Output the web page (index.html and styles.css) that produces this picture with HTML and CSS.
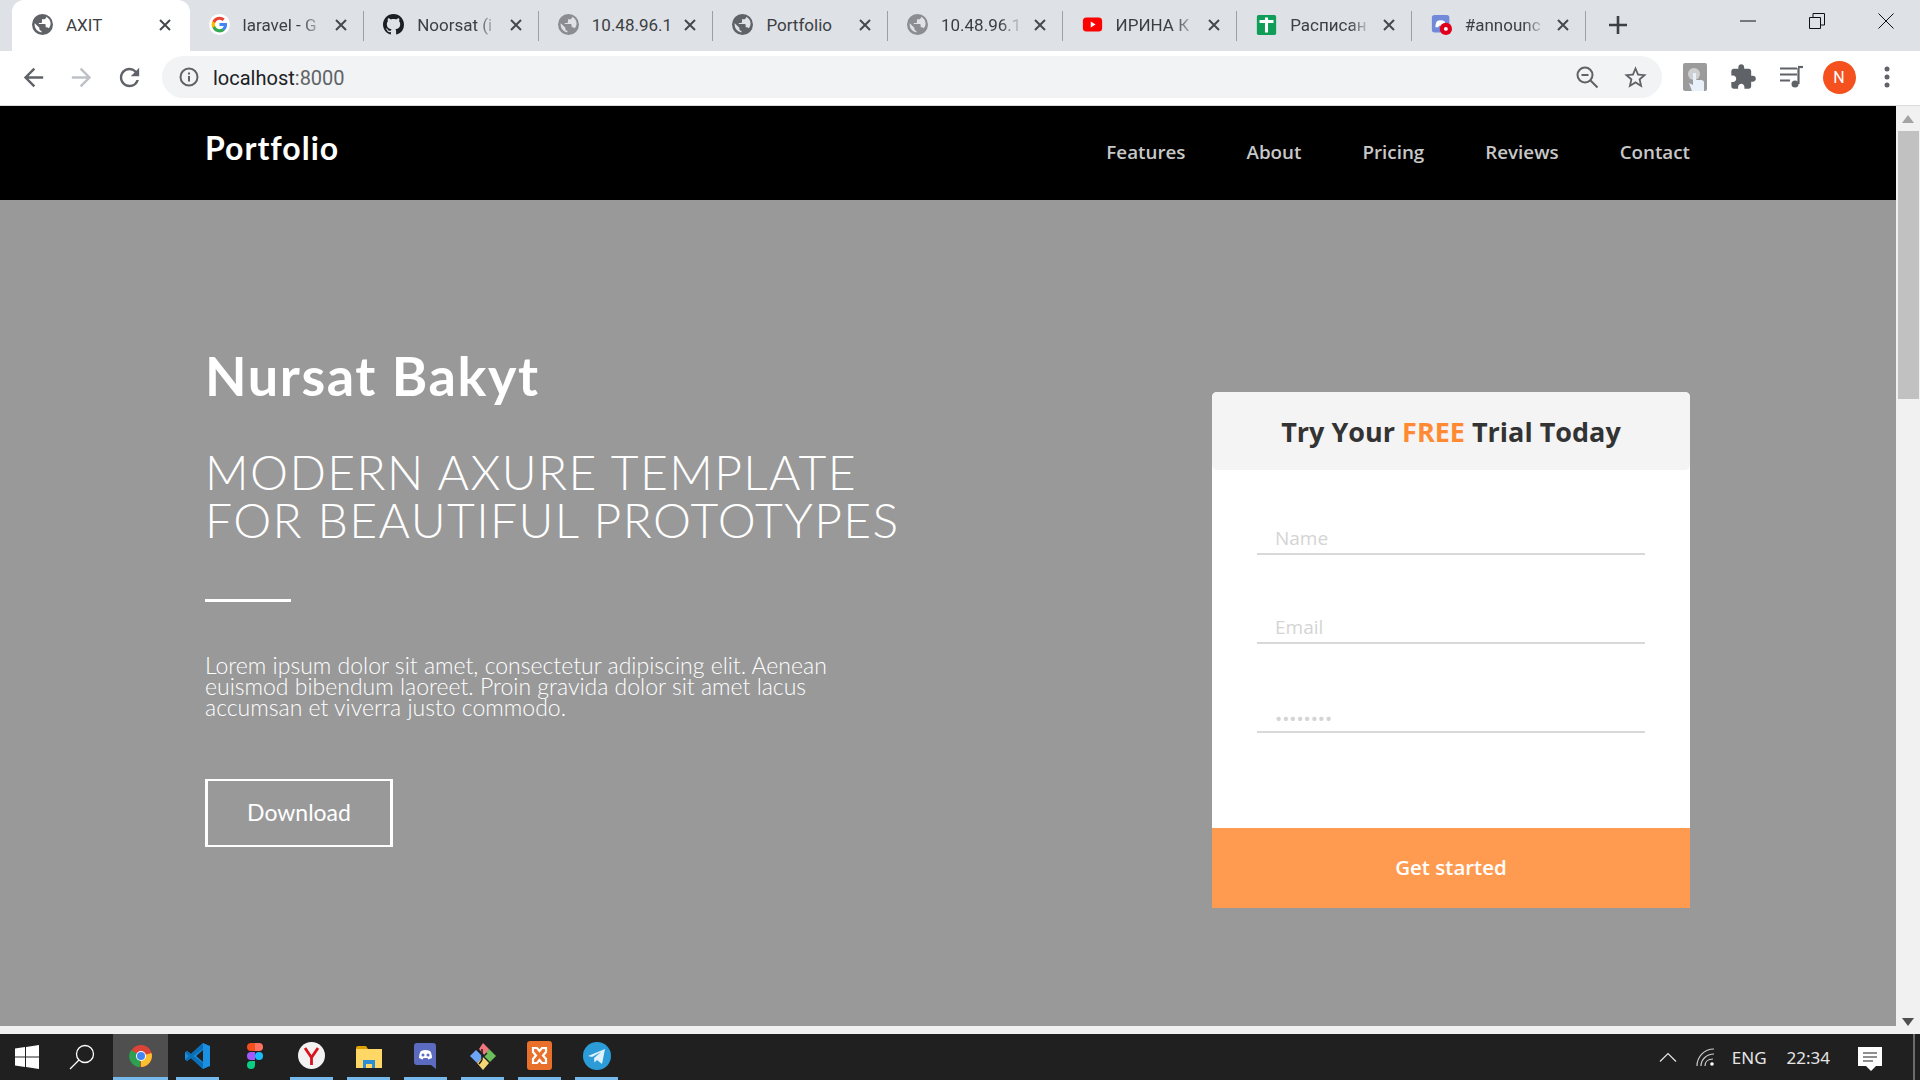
FILE: index.html
```html
<!DOCTYPE html>
<html lang="en">
<head>
    <meta charset="UTF-8">
    <title>AXIT</title>
    <link rel="stylesheet" href="styles.css">
</head>
<body>
    <svg class="defs" width="0" height="0">
        <symbol id="globe" viewBox="2 2 20 20"><path fill-rule="evenodd" d="M12 2a10 10 0 1 0 0 20 10 10 0 0 0 0-20zM4.300 10.500L9 15v1c0 1.100.9 2 2 2v1.500C7.500 19 4.500 16 4.500 12c0-.5 0-1 .2-1.500zM15.500 5c-.3 1-1 2-2.500 2h-1.500v2.500c0 .5-.5 1-1 1H8.500v1H14c.5 0 1 .5 1 1v2h1c.8 0 1.500.4 1.900 1 1.200-1.300 1.800-3 1.800-4.500 0-2.900-1.700-5.300-4.200-6.500z"/></symbol>
        <symbol id="close" viewBox="0 0 12 12"><path d="M1 1l10 10M11 1L1 11" fill="none" stroke="currentColor" stroke-width="2"/></symbol>
    </svg>

    <!-- browser tabs -->
    <div class="tabstrip">
        <div class="tab active">
            <svg class="favicon globe dark"><use href="#globe"/></svg>
            <span class="tab-title">AXIT</span>
            <svg class="tab-close"><use href="#close"/></svg>
        </div>
        <div class="tab">
            <svg class="favicon" viewBox="0 0 24 24">
                <circle cx="12" cy="12" r="12" fill="#fff"/>
                <path d="M20.600 12.200c0-.6-.1-1.200-.2-1.800H12v3.400h4.800c-.2 1.100-.8 2-1.800 2.700v2.200h2.900c1.700-1.600 2.700-3.900 2.700-6.500z" fill="#4285f4"/>
                <path d="M12 21c2.400 0 4.500-.8 5.900-2.200L15 16.500c-.8.5-1.800.9-3 .9-2.300 0-4.300-1.600-5-3.700H4v2.300C5.500 19 8.500 21 12 21z" fill="#34a853"/>
                <path d="M7 13.700c-.4-1.100-.4-2.300 0-3.400V8H4c-1.300 2.500-1.300 5.500 0 8z" fill="#fbbc05"/>
                <path d="M12 6.600c1.300 0 2.500.5 3.400 1.300L18 5.400C16.400 3.900 14.300 3 12 3 8.500 3 5.500 5 4 8l3 2.300c.7-2.100 2.700-3.700 5-3.700z" fill="#ea4335"/>
            </svg>
            <span class="tab-title fade">laravel - G</span>
            <svg class="tab-close"><use href="#close"/></svg>
        </div>
        <div class="tab">
            <svg class="favicon" viewBox="0 0 16 16"><path fill="#1b1f23" d="M8 0C3.580 0 0 3.580 0 8c0 3.540 2.290 6.530 5.470 7.590.4.070.55-.17.55-.38 0-.19-.01-.82-.01-1.490-2.010.37-2.530-.49-2.690-.94-.09-.23-.48-.94-.82-1.130-.28-.15-.68-.52-.01-.53.63-.01 1.080.58 1.230.82.72 1.210 1.870.87 2.330.66.07-.52.28-.87.51-1.070-1.780-.2-3.640-.89-3.640-3.950 0-.87.31-1.590.82-2.150-.08-.2-.36-1.020.08-2.120 0 0 .67-.21 2.200.82.64-.18 1.320-.27 2-.27.68 0 1.360.09 2 .27 1.530-1.040 2.200-.82 2.200-.82.44 1.100.16 1.920.08 2.120.51.56.82 1.270.82 2.150 0 3.070-1.870 3.750-3.650 3.950.29.25.54.73.54 1.480 0 1.070-.01 1.930-.01 2.200 0 .21.15.46.55.38A8.013 8.013 0 0016 8c0-4.420-3.580-8-8-8z"/></svg>
            <span class="tab-title fade">Noorsat (i</span>
            <svg class="tab-close"><use href="#close"/></svg>
        </div>
        <div class="tab">
            <svg class="favicon globe"><use href="#globe"/></svg>
            <span class="tab-title">10.48.96.1</span>
            <svg class="tab-close"><use href="#close"/></svg>
        </div>
        <div class="tab">
            <svg class="favicon globe dark"><use href="#globe"/></svg>
            <span class="tab-title">Portfolio</span>
            <svg class="tab-close"><use href="#close"/></svg>
        </div>
        <div class="tab">
            <svg class="favicon globe"><use href="#globe"/></svg>
            <span class="tab-title fade">10.48.96.1</span>
            <svg class="tab-close"><use href="#close"/></svg>
        </div>
        <div class="tab">
            <svg class="favicon" viewBox="0 0 24 24">
                <rect x="1" y="4" width="22" height="16" rx="4" fill="#f00"/>
                <path d="M10 8.500v7l5.500-3.500z" fill="#fff"/>
            </svg>
            <span class="tab-title fade">ИРИНА К</span>
            <svg class="tab-close"><use href="#close"/></svg>
        </div>
        <div class="tab">
            <svg class="favicon" viewBox="0 0 24 24">
                <rect x="1" y="1" width="22" height="23" rx="2" fill="#0f9d58"/>
                <path d="M4 8.500h16M12 4v17" fill="none" stroke="#fff" stroke-width="3.500"/>
            </svg>
            <span class="tab-title fade">Расписан</span>
            <svg class="tab-close"><use href="#close"/></svg>
        </div>
        <div class="tab">
            <svg class="favicon" viewBox="0 0 24 24">
                <rect x="1" y="1" width="20" height="20" rx="3" fill="#7289da"/>
                <path d="M5 15c0-3 1-6 2-7 2-1 6-1 8 0 1 1 1.500 3 1.500 5l-3 2-1-1.500h-3L8 15z" fill="#fff"/>
                <circle cx="17" cy="17" r="7" fill="#e0001b"/>
                <circle cx="17" cy="17" r="2.200" fill="#fff"/>
            </svg>
            <span class="tab-title fade">#announc</span>
            <svg class="tab-close"><use href="#close"/></svg>
        </div>
        <svg class="new-tab" viewBox="0 0 18 18"><path d="M9 0v18M0 9h18" fill="none" stroke="#3c4043" stroke-width="2.600"/></svg>
        <div class="window-controls">
            <div class="window-btn"><svg width="16" height="16" viewBox="0 0 16 16"><path d="M0 8h16" stroke="#111" fill="none"/></svg></div>
            <div class="window-btn"><svg width="16" height="16" viewBox="0 0 16 16"><path d="M.5 4.500h11v11H.5zM4 4.500V.5h11.500v11.500H11.500" stroke="#111" fill="none"/></svg></div>
            <div class="window-btn"><svg width="16" height="16" viewBox="0 0 16 16"><path d="M.5.5l15 15M15.500.5l-15 15" stroke="#111" fill="none"/></svg></div>
        </div>
    </div>

    <!-- address bar -->
    <div class="toolbar">
        <div class="tool"><svg width="29" height="29" viewBox="0 0 24 24" fill="#5f6368"><path d="M20 11H7.830l5.590-5.590L12 4l-8 8 8 8 1.410-1.410L7.830 13H20v-2z"/></svg></div>
        <div class="tool"><svg width="29" height="29" viewBox="0 0 24 24" fill="#bdc1c6"><path d="M4 11h12.170l-5.590-5.590L12 4l8 8-8 8-1.410-1.410L16.170 13H4v-2z"/></svg></div>
        <div class="tool"><svg width="29" height="29" viewBox="0 0 24 24" fill="#5f6368"><path d="M17.650 6.350A7.958 7.958 0 0 0 12 4c-4.420 0-7.990 3.580-7.990 8s3.570 8 7.990 8c3.730 0 6.840-2.550 7.730-6h-2.080A5.990 5.990 0 0 1 12 18c-3.310 0-6-2.690-6-6s2.690-6 6-6c1.660 0 3.140.690 4.220 1.780L13 11h7V4l-2.350 2.350z"/></svg></div>
        <div class="omnibox">
            <svg class="info" width="22" height="22" viewBox="0 0 22 22"><circle cx="11" cy="11" r="8.500" fill="none" stroke="#5f6368" stroke-width="2"/><path d="M11 10v5.500M11 6.500v2" stroke="#5f6368" stroke-width="2" fill="none"/></svg>
            <span class="url"><span class="host">localhost</span>:8000</span>
            <div class="omni-icons">
                <div class="tool"><svg width="24" height="24" viewBox="0 0 24 24" fill="none" stroke="#5f6368" stroke-width="2"><circle cx="10" cy="10" r="7.500"/><path d="M6.500 10h7M15.500 15.500l7 7"/></svg></div>
                <div class="tool"><svg width="27" height="27" viewBox="0 0 24 24" fill="#5f6368"><path d="M22 9.240l-7.190-.620L12 2 9.190 8.630 2 9.240l5.460 4.730L5.820 21 12 17.270 18.180 21l-1.630-7.030L22 9.240zM12 15.400l-3.760 2.270 1-4.280-3.320-2.880 4.380-.380L12 6.100l1.710 4.040 4.380.380-3.320 2.880 1 4.280L12 15.400z"/></svg></div>
            </div>
        </div>
        <div class="tool">
            <svg width="24" height="28" viewBox="0 0 24 28"><rect width="24" height="28" rx="2" fill="#9b9b9b"/><circle cx="11" cy="11" r="6" fill="#cfcfcf"/><path d="M10 10h3v7h5c2 0 3 1 3 3v8H9l-3-8 4 2z" fill="#e8f1fa"/></svg>
        </div>
        <div class="tool"><svg width="28" height="28" viewBox="0 0 24 24" fill="#5f6368"><path d="M20.500 11H19V7c0-1.100-.9-2-2-2h-4V3.500C13 2.120 11.880 1 10.500 1S8 2.120 8 3.500V5H4c-1.100 0-1.990.9-1.990 2v3.800H3.500c1.490 0 2.700 1.210 2.700 2.700s-1.210 2.700-2.700 2.700H2V20c0 1.100.9 2 2 2h3.800v-1.500c0-1.490 1.210-2.700 2.700-2.700 1.490 0 2.700 1.210 2.700 2.700V22H17c1.100 0 2-.9 2-2v-4h1.500c1.380 0 2.500-1.120 2.500-2.500S21.880 11 20.500 11z"/></svg></div>
        <div class="tool"><svg width="25" height="24" viewBox="0 0 25 24" fill="none" stroke="#5f6368" stroke-width="2.200"><path d="M1 3.500h17M1 9.500h17M1 15.500h10M19.500 3v16"/><circle cx="16" cy="19" r="3.500" fill="#5f6368" stroke="none"/><path d="M19 2h5"/></svg></div>
        <div class="tool"><div class="avatar">N</div></div>
        <div class="tool"><svg width="6" height="22" viewBox="0 0 6 22" fill="#5f6368"><circle cx="3" cy="3" r="2.500"/><circle cx="3" cy="11" r="2.500"/><circle cx="3" cy="19" r="2.500"/></svg></div>
    </div>

    <div class="viewport">
        <div class="page">
            <nav class="navbar">
                <a class="brand">Portfolio</a>
                <div class="nav-links">
                    <a>Features</a>
                    <a>About</a>
                    <a>Pricing</a>
                    <a>Reviews</a>
                    <a>Contact</a>
                </div>
            </nav>
            <section class="hero">
                <div class="hero-text">
                    <h1>Nursat Bakyt</h1>
                    <h2>MODERN AXURE TEMPLATE<br>FOR BEAUTIFUL PROTOTYPES</h2>
                    <div class="rule"></div>
                    <p>Lorem ipsum dolor sit amet, consectetur adipiscing elit. Aenean<br>euismod bibendum laoreet. Proin gravida dolor sit amet lacus<br>accumsan et viverra justo commodo.</p>
                    <a class="download">Download</a>
                </div>
                <div class="card">
                    <div class="card-head">Try Your <span class="free">FREE</span> Trial Today</div>
                    <form class="card-form">
                        <input type="text" placeholder="Name">
                        <input type="text" placeholder="Email">
                        <input class="pass" type="text" placeholder="••••••••">
                    </form>
                    <div class="card-btn">Get started</div>
                </div>
            </section>
            <div class="hscroll"></div>
        </div>
        <div class="vscroll">
            <svg class="arrow" width="14" height="8" viewBox="0 0 14 8"><path d="M7 0l6 8H1z" fill="#a3a3a3"/></svg>
            <div class="thumb"></div>
            <svg class="arrow down" width="14" height="8" viewBox="0 0 14 8"><path d="M7 8L1 0h12z" fill="#505050"/></svg>
        </div>
    </div>

    <!-- windows taskbar -->
    <div class="taskbar">
        <div class="start">
            <svg width="24" height="24" viewBox="0 0 24 24" fill="#fff"><path d="M0 3.500l10-1.400v9.300H0zM11 2l13-2v11.400H11zM0 12.500h10v9.400L0 20.500zM11 12.500h13V24l-13-2z"/></svg>
        </div>
        <div class="search">
            <svg width="26" height="26" viewBox="0 0 26 26" fill="none" stroke="#fff" stroke-width="1.300"><circle cx="16" cy="10" r="8.500"/><path d="M10 16L1 25"/></svg>
        </div>
        <div class="task current"><div class="task-in">
            <svg width="24" height="24" viewBox="0 0 24 24">
                <circle cx="12" cy="12" r="11" fill="#db4437"/>
                <path d="M12 12L22.500 9A11 11 0 0 1 12 23z" fill="#fbc02d"/>
                <path d="M12 12l-1 11A11 11 0 0 1 2 6z" fill="#2e9e4f"/>
                <circle cx="12" cy="12" r="5" fill="#fff"/>
                <circle cx="12" cy="12" r="4" fill="#4285f4"/>
            </svg>
        </div></div>
        <div class="task"><div class="task-in">
            <svg width="26" height="26" viewBox="0 0 26 26">
                <path d="M18 0l7 3v20l-7 3L6 15l-4 3-2-1.500V9.500L2 8l4 3z" fill="#1b8fe0"/>
                <path d="M18 7l-7 6 7 6z" fill="#202020"/>
                <path d="M18 0v26L0 9.500 2 8l16 12V6L2 18l-2-1.500z" fill="#0a6fb8"/>
            </svg>
        </div></div>
        <div class="task nobar"><div class="task-in">
            <svg width="16" height="26" viewBox="0 0 16 26">
                <path d="M0 4a4 4 0 0 1 4-4h4v8H4a4 4 0 0 1-4-4z" fill="#f24e1e"/>
                <path d="M8 0h4a4 4 0 0 1 0 8H8z" fill="#ff7262"/>
                <path d="M0 13a4 4 0 0 1 4-4h4v8H4a4 4 0 0 1-4-4z" fill="#a259ff"/>
                <circle cx="12" cy="13" r="4" fill="#1abcfe"/>
                <path d="M0 22a4 4 0 0 1 4-4h4v4a4 4 0 0 1-8 0z" fill="#0acf83"/>
            </svg>
        </div></div>
        <div class="task"><div class="task-in">
            <svg width="27" height="27" viewBox="0 0 27 27">
                <circle cx="13.500" cy="13.500" r="13.500" fill="#f2f2f2"/>
                <path d="M7 6l6.500 9.500L20 6M13.500 15v8" fill="none" stroke="#d8141c" stroke-width="2.800"/>
            </svg>
        </div></div>
        <div class="task"><div class="task-in">
            <svg width="28" height="24" viewBox="0 0 28 24">
                <path d="M1 4a2 2 0 0 1 2-2h8l2 3H1z" fill="#e0a100"/>
                <rect x="1" y="5" width="26" height="19" fill="#ffd765"/>
                <path d="M8 24v-8h12v8h-3v-4h-6v4z" fill="#2b8dd6"/>
            </svg>
        </div></div>
        <div class="task"><div class="task-in">
            <svg width="24" height="26" viewBox="0 0 24 26">
                <path d="M3 0h16a3 3 0 0 1 3 3v23l-5-4H3a3 3 0 0 1-3-3V3a3 3 0 0 1 3-3z" fill="#5b6bc0"/>
                <path d="M5 15c0-3 1-6 2-7 3-1.500 6-1.500 9 0 1 1 2 4 2 7l-3.500 1.500-1-1.500h-4l-1 1.500z" fill="#fff"/>
                <circle cx="9" cy="12" r="1.500" fill="#5b6bc0"/>
                <circle cx="14" cy="12" r="1.500" fill="#5b6bc0"/>
            </svg>
        </div></div>
        <div class="task"><div class="task-in">
            <svg width="26" height="28" viewBox="0 0 26 28">
                <path d="M6 8l7 7-6 6-7-7z" fill="#6ea5f5"/>
                <path d="M13 1l6 6-4 7-6-7z" fill="#f0767f"/>
                <path d="M19 7l7 7-6 6-6-6z" fill="#6cbf5b"/>
                <path d="M13 15l6 6-6 7-6-7z" fill="#f7d774"/>
                <path d="M12 7v11M17 11l-4 4M9 22l3-4" stroke="#202020" stroke-width="1.500" fill="none"/>
            </svg>
        </div></div>
        <div class="task"><div class="task-in">
            <svg width="25" height="29" viewBox="0 0 25 29">
                <rect width="25" height="29" rx="3" fill="#e8702a"/>
                <path d="M6 7h4l2.500 3L15 7h4v4l-3 3.500 3 3.500v4h-4l-2.500-3L10 22H6v-4l3-3.500L6 11z" fill="none" stroke="#fff" stroke-width="2.200"/>
            </svg>
        </div></div>
        <div class="task"><div class="task-in">
            <svg width="28" height="28" viewBox="0 0 28 28">
                <circle cx="14" cy="14" r="14" fill="#2c9cd8"/>
                <path d="M5 14l17-7-3 15-5-4-2.500 2.500-.5-4.500 7-6-9 5z" fill="#dff1fa"/>
            </svg>
        </div></div>
        <div class="tray">
            <svg width="18" height="10" viewBox="0 0 18 10"><path d="M1 9.500l8-8 8 8" fill="none" stroke="#e6e6e6" stroke-width="1.200"/></svg>
            <svg class="tray-wifi" width="19" height="18" viewBox="0 0 19 18" fill="none" stroke="#cfcfcf" stroke-width="1.200"><path d="M1 18C1 9 8 1 18 1M5 18c0-6 5-12 13-12M9 18c0-4 3-7 8-7"/><circle cx="16" cy="16" r="1.800" fill="#fff" stroke="none"/></svg>
            <span class="tray-lang">ENG</span>
            <span class="tray-time">22:34</span>
            <svg class="tray-note" width="24" height="24" viewBox="0 0 24 24"><path d="M0 0h24v19h-6l-5 5-5-5H0z" fill="#fff"/><path d="M5 6h14M5 10h14M5 14h10" stroke="#202020" stroke-width="1.200" fill="none"/></svg>
            <div class="show-desktop"></div>
        </div>
    </div>
</body>
</html>
```

FILE: styles.css
```css
* {
    box-sizing: border-box;
}
body {
    margin: 0;
    width: 1920px;
    height: 1080px;
    overflow: hidden;
    display: flex;
    flex-direction: column;
    font-family: "Open Sans", sans-serif;
    background: #fff;
}
.defs {
    display: none;
}

/* tabs */
.tabstrip {
    height: 51px;
    display: flex;
    background: #dee1e6;
    padding-left: 12px;
    color: #3c4043;
}
.tab {
    width: 174.6px;
    display: flex;
    align-items: center;
    padding: 0 17px 2px 19px;
    position: relative;
}
.tab::after {
    content: "";
    position: absolute;
    right: 0;
    top: 11px;
    height: 30px;
    width: 1px;
    background: #9aa0a6;
}
.tab.active {
    width: 177.6px;
    padding-left: 20px;
    padding-right: 19px;
    background: #fff;
    border-radius: 12px 12px 0 0;
}
.tab.active::after {
    display: none;
}
.favicon {
    width: 21px;
    height: 21px;
    flex: none;
}
.favicon.globe {
    fill: #8b8d91;
}
.favicon.globe.dark {
    fill: #5f6368;
}
.tab-title {
    flex: 1;
    margin: 0 11px 0 13px;
    font-family: Roboto, sans-serif;
    font-size: 17px;
    white-space: nowrap;
    overflow: hidden;
}
.tab-title.fade {
    -webkit-mask-image: linear-gradient(to right, #000 72%, transparent 100%);
    mask-image: linear-gradient(to right, #000 72%, transparent 100%);
}
.tab-close {
    width: 12px;
    height: 12px;
    flex: none;
    color: #45484c;
}
.new-tab {
    width: 18px;
    height: 18px;
    margin: 16px 0 0 23px;
}
.window-controls {
    margin-left: auto;
    display: flex;
}
.window-btn {
    width: 69px;
    height: 42px;
    display: flex;
    align-items: center;
    justify-content: center;
}

/* toolbar */
.toolbar {
    height: 55px;
    display: flex;
    align-items: center;
    padding: 0 9px 2px;
    background: #fff;
    border-bottom: 1px solid #dadce0;
}
.tool {
    width: 48px;
    height: 42px;
    flex: none;
    display: flex;
    align-items: center;
    justify-content: center;
}
.omnibox {
    flex: 1;
    height: 42px;
    margin: 0 9px 0 9px;
    border-radius: 21px;
    background: #f1f3f4;
    display: flex;
    align-items: center;
    padding-left: 16px;
}
.url {
    margin: 2px 0 0 13px;
    font-family: Roboto, sans-serif;
    font-size: 20px;
    color: #5f6368;
}
.host {
    color: #202124;
}
.omni-icons {
    margin-left: auto;
    display: flex;
    margin-right: 3px;
}
.avatar {
    width: 33px;
    height: 33px;
    border-radius: 50%;
    background: #f4511e;
    color: #fff;
    font-family: Roboto, sans-serif;
    font-size: 16px;
    display: flex;
    align-items: center;
    justify-content: center;
}

/* the page itself */
.viewport {
    height: 928px;
    display: flex;
}
.page {
    width: 1896px;
    display: flex;
    flex-direction: column;
}
.navbar {
    height: 94px;
    background: #000;
    display: flex;
    justify-content: space-between;
    padding: 0 206px 0 205px;
    flex: none;
}
.brand {
    font-family: Lato, sans-serif;
    font-size: 32px;
    font-weight: 700;
    letter-spacing: 1px;
    line-height: 38px;
    margin-top: 23px;
    color: #fff;
}
.nav-links {
    display: flex;
    gap: 61px;
    margin-top: 27px;
    font-size: 18.800px;
    line-height: 38px;
    font-weight: 600;
    color: #c8c8c8;
}
.hero {
    flex: 1;
    background: #999;
    display: flex;
    justify-content: space-between;
    padding: 0 206px 0 205px;
}
.hero-text {
    padding-top: 146px;
    font-family: Lato, sans-serif;
    color: #fff;
}
.hero-text h1 {
    margin: 0 0 42px;
    font-size: 54px;
    line-height: 60px;
    font-weight: 700;
    letter-spacing: 1.600px;
}
.hero-text h2 {
    margin: 0;
    font-size: 48px;
    line-height: 48px;
    font-weight: 300;
    letter-spacing: 1.400px;
}
.rule {
    width: 86px;
    height: 3px;
    margin: 55px 0 53px;
    background: #fff;
}
.hero-text p {
    margin: 0 0 61px;
    font-size: 23px;
    line-height: 21px;
    font-weight: 300;
}
.download {
    display: flex;
    width: 188px;
    height: 68px;
    align-items: center;
    justify-content: center;
    border-style: solid;
    border-color: #fff;
    border-width: 2px 3px;
    font-size: 23px;
    font-weight: 400;
    padding-bottom: 2px;
}
.card {
    width: 478px;
    height: 516px;
    margin-top: 192px;
    background: #fff;
    border-radius: 5px 5px 0 0;
    display: flex;
    flex-direction: column;
}
.card-head {
    height: 78px;
    background: #f4f4f4;
    border-radius: 5px;
    font-size: 27px;
    font-weight: 700;
    color: #333;
    text-align: center;
    line-height: 80px;
}
.free {
    color: #ff8a33;
}
.card-form {
    flex: 1;
    padding: 38px 45px 0;
    display: flex;
    flex-direction: column;
    gap: 42px;
}
.card-form input {
    height: 47px;
    border: none;
    border-bottom: 2px solid #d8d8d8;
    padding: 15px 18px 0;
    font-family: "Open Sans", sans-serif;
    font-size: 19px;
    outline: none;
}
.card-form input.pass {
    padding-top: 20px;
}
.card-form input::placeholder {
    color: #d4d4d4;
}
.card-btn {
    height: 80px;
    background: #ff9b50;
    color: #fff;
    font-size: 20.500px;
    font-weight: 600;
    text-align: center;
    line-height: 78px;
}
.hscroll {
    height: 8px;
    flex: none;
    background: #f1f1f1;
}
.vscroll {
    width: 24px;
    background: #f1f1f1;
    display: flex;
    flex-direction: column;
    align-items: center;
}
.arrow {
    margin-top: 9px;
}
.arrow.down {
    margin-top: auto;
    margin-bottom: 8px;
}
.thumb {
    width: 21px;
    height: 268px;
    margin-top: 8px;
    background: #c1c1c1;
}

/* taskbar */
.taskbar {
    height: 46px;
    background: #202020;
    display: flex;
    color: #e6e6e6;
}
.start {
    width: 54px;
    display: flex;
    align-items: center;
    justify-content: center;
}
.search {
    width: 59px;
    padding-right: 4px;
    display: flex;
    align-items: center;
    justify-content: center;
}
.task {
    width: 57px;
    padding: 0 7px;
}
.task-in {
    height: 46px;
    display: flex;
    align-items: center;
    justify-content: center;
    border-bottom: 3px solid #76b9ed;
}
.task.nobar .task-in {
    border-bottom-color: transparent;
}
.task.current {
    width: 55px;
    margin-right: 1px;
    padding: 0;
    background: #4f4f4f;
}
.tray {
    margin-left: auto;
    display: flex;
    align-items: center;
    padding-right: 5px;
    font-family: "Noto Sans", sans-serif;
    font-size: 17px;
}
.tray-wifi {
    margin-left: 18.500px;
}
.tray-lang {
    margin-left: 17px;
}
.tray-time {
    margin-left: 20px;
}
.tray-note {
    margin: 4px 0 0 28px;
}
.show-desktop {
    width: 2px;
    height: 46px;
    margin-left: 31px;
    background: #6b6b6b;
}
```
